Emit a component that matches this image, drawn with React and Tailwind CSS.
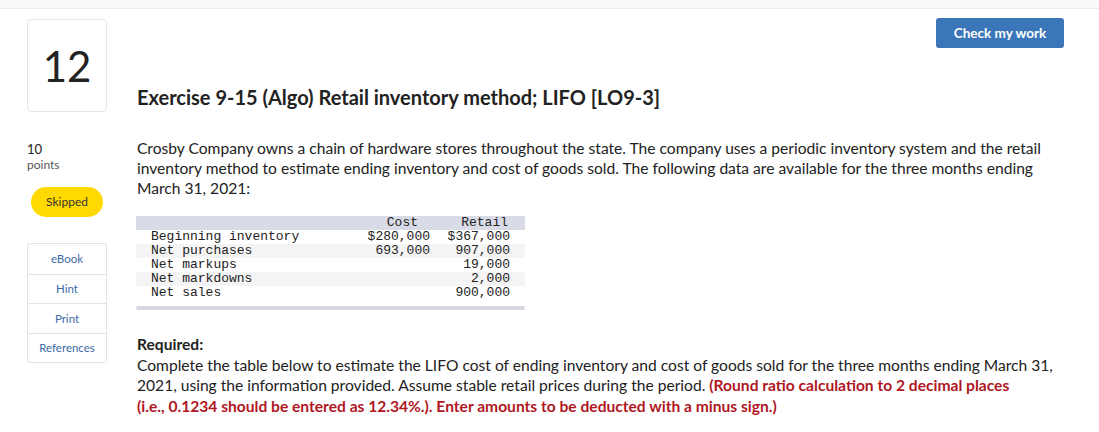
const ROWS = [
  { label: 'Beginning inventory', cost: '$280,000', retail: '$367,000' },
  { label: 'Net purchases', cost: '693,000', retail: '907,000' },
  { label: 'Net markups', cost: '', retail: '19,000' },
  { label: 'Net markdowns', cost: '', retail: '2,000' },
  { label: 'Net sales', cost: '', retail: '900,000' },
];

const LINKS = ['eBook', 'Hint', 'Print', 'References'];

export default function App() {
  return (
    <div className="w-[1099px] h-[432px] overflow-hidden bg-white text-[#222] font-['Lato','Open_Sans',sans-serif]">
      <div className="h-[9px] bg-[#fafafa] border-b border-[#ececec]" />

      <div className="flex pl-[27px] pr-[35px]">
        {/* left column */}
        <div className="w-[80px] shrink-0 pt-[10px]">
          <div className="h-[93px] border border-[#e6e6e6] rounded-[4px] flex items-center justify-center text-[42px] leading-none text-[#222]">
            12
          </div>
          <div className="mt-[29px] text-[13px] leading-[16px]">10</div>
          <div className="text-[12px] leading-[16px] text-[#555]">points</div>
          <div className="mt-[14px] ml-[4px] w-[72px] h-[30px] rounded-full bg-[#ffd900] flex items-center justify-center text-[12px] text-[#333]">
            Skipped
          </div>
          <div className="mt-[26px] border border-[#e3e3e3] rounded-[3px]">
            {LINKS.map((l, i) => (
              <div
                key={l}
                className={`h-[29.5px] flex items-center justify-center text-[11.5px] text-[#3d6aa6] ${i > 0 ? 'border-t border-[#e3e3e3]' : ''}`}
              >
                {l}
              </div>
            ))}
          </div>
        </div>

        {/* main */}
        <div className="flex-1 pl-[30px]">
          <div className="flex justify-end pt-[9px]">
            <button className="h-[30px] w-[128px] rounded-[3px] bg-[#3b76b9] text-white text-[13.5px] font-bold">
              Check my work
            </button>
          </div>
          <h1 className="mt-[37px] text-[20px] leading-[24px] font-bold">
            Exercise 9-15 (Algo) Retail inventory method; LIFO [LO9-3]
          </h1>
          <p className="mt-[29px] text-[15.6px] leading-[20px] text-[#222]">
            Crosby Company owns a chain of hardware stores throughout the state. The company uses a periodic inventory system and the retail inventory method to estimate ending inventory and cost of goods sold. The following data are available for the three months ending March 31, 2021:
          </p>

          <div className="mt-[18px] w-[389px] -ml-[1px] font-['Liberation_Mono',monospace] text-[13px] leading-[14px] text-[#222]">
            <div className="flex bg-[#d9dce6] h-[14px]">
              <div className="w-[212px]" />
              <div className="w-[82px] text-right pr-[12px]">Cost</div>
              <div className="w-[80px] text-right pr-[2px]">Retail</div>
            </div>
            {ROWS.map((r, i) => (
              <div key={r.label} className={`flex h-[14px] ${i % 2 === 1 ? 'bg-[#f4f4f4]' : ''}`}>
                <div className="w-[212px] pl-[15px]">{r.label}</div>
                <div className="w-[82px] text-right">{r.cost}</div>
                <div className="w-[80px] text-right">{r.retail}</div>
              </div>
            ))}
            <div className="mt-[6px] h-[4px] rounded-full bg-[#d5d8e0]" />
          </div>

          <div className="mt-[24px] text-[15.6px] leading-[20.5px]">
            <div className="font-bold">Required:</div>
            <p>
              Complete the table below to estimate the LIFO cost of ending inventory and cost of goods sold for the three months ending March 31, 2021, using the information provided. Assume stable retail prices during the period.{' '}
              <span className="font-bold text-[#b0171f]">
                (Round ratio calculation to 2 decimal places
                <br />
                (i.e., 0.1234 should be entered as 12.34%.). Enter amounts to be deducted with a minus sign.)
              </span>
            </p>
          </div>
        </div>
      </div>
    </div>
  );
}
